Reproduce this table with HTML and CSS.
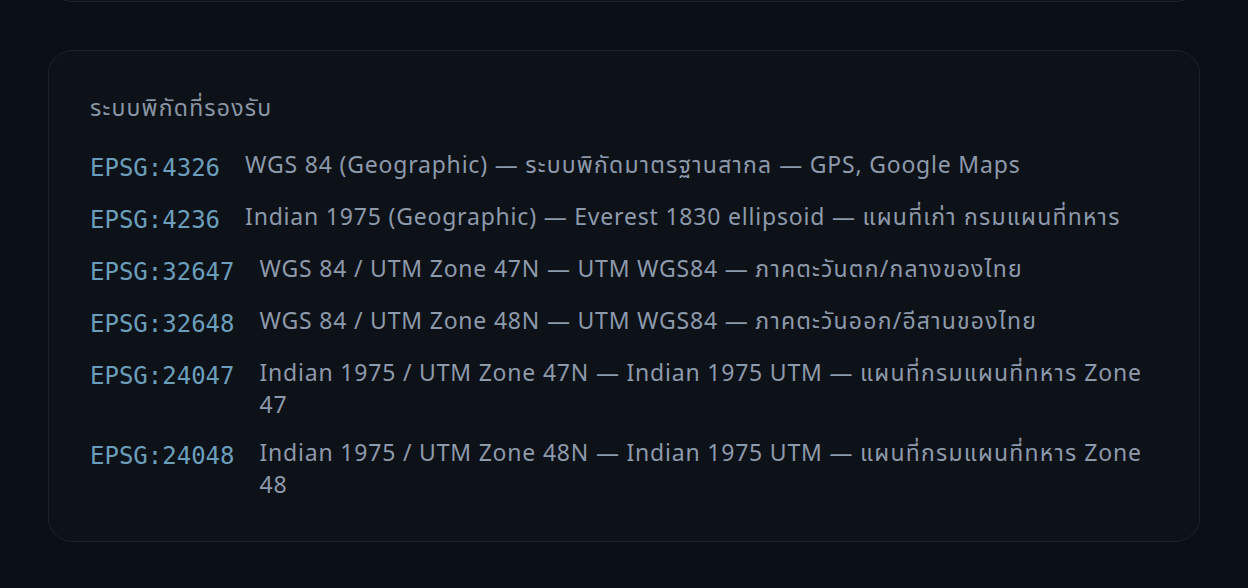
FILE: index.html
```html
<!DOCTYPE html>
<html lang="th">
<head>
<meta charset="utf-8">
<link rel="stylesheet" href="styles.css">
</head>
<body>
<div class="page">
  <div class="card card-top"></div>
  <section class="card">
    <h3 class="title"><span class="th">ระบบพิกัดที่รองรับ</span></h3>
    <ul class="list">
      <li class="row"><code class="code">EPSG:4326</code><span class="desc">WGS 84 (Geographic) — <span class="th">ระบบพิกัดมาตรฐานสากล</span> — GPS, Google Maps</span></li>
      <li class="row"><code class="code">EPSG:4236</code><span class="desc">Indian 1975 (Geographic) — Everest 1830 ellipsoid — <span class="th">แผนที่เก่า กรมแผนที่ทหาร</span></span></li>
      <li class="row"><code class="code">EPSG:32647</code><span class="desc">WGS 84 / UTM Zone 47N — UTM WGS84 — <span class="th">ภาคตะวันตก/กลางของไทย</span></span></li>
      <li class="row"><code class="code">EPSG:32648</code><span class="desc">WGS 84 / UTM Zone 48N — UTM WGS84 — <span class="th">ภาคตะวันออก/อีสานของไทย</span></span></li>
      <li class="row"><code class="code">EPSG:24047</code><span class="desc">Indian 1975 / UTM Zone 47N — Indian 1975 UTM — <span class="th">แผนที่กรมแผนที่ทหาร</span> Zone 47</span></li>
      <li class="row"><code class="code">EPSG:24048</code><span class="desc">Indian 1975 / UTM Zone 48N — Indian 1975 UTM — <span class="th">แผนที่กรมแผนที่ทหาร</span> Zone 48</span></li>
    </ul>
  </section>
</div>
</body>
</html>
```
FILE: styles.css
```css
html, body {
  margin: 0;
  padding: 0;
  background: #0b0f16;
}
body {
  font-family: "Noto Sans", "Noto Sans Thai", sans-serif;
  color: #8d9aaa;
}
.page {
  padding: 0 48px;
  display: flex;
  flex-direction: column;
  gap: 48px;
  margin-top: -101px;
}
.card {
  background: #0d1118;
  border: 1px solid #1b232d;
  border-radius: 24px;
  padding: 40px 40px 41px 41px;
}
.card-top {
  height: 20px;
}
.title {
  margin: 0 0 25px;
  font-size: 23px;
  font-weight: 400;
  line-height: 32px;
  color: #8a96a4;
}
.th {
  letter-spacing: 1.2px;
}
.list {
  list-style: none;
  margin: 0;
  padding: 0;
  display: flex;
  flex-direction: column;
  gap: 16px;
}
.row {
  display: flex;
  align-items: flex-start;
  gap: 25px;
  font-size: 23px;
  line-height: 32px;
}
.code {
  font-family: "DejaVu Sans Mono", monospace;
  font-size: 24px;
  line-height: 32px;
  padding-top: 4px;
  color: #6b9ebb;
  flex: none;
}
.desc {
  color: #8d9aab;
  letter-spacing: 0.8px;
}
```
